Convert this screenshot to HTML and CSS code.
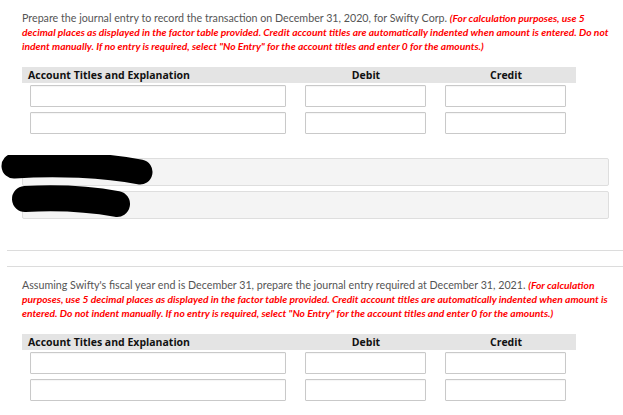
FILE: index.html
```html
<!DOCTYPE html>
<html lang="en">
<head>
<meta charset="utf-8">
<title>Journal entry</title>
<link rel="stylesheet" href="styles.css">
</head>
<body>
<div class="page">
  <section class="part">
    <p class="prompt">Prepare the journal entry to record the transaction on December 31, 2020, for Swifty Corp. <em class="note">(For calculation purposes, use 5 decimal places as displayed in the factor table provided. Credit account titles are automatically indented when amount is entered. Do not indent manually. If no entry is required, select "No Entry" for the account titles and enter 0 for the amounts.)</em></p>
    <div class="journal">
      <div class="head head-title">Account Titles and Explanation</div>
      <div class="head head-num">Debit</div>
      <div class="head head-num">Credit</div>
      <div class="cell"><input class="field field-title" type="text"></div>
      <div class="cell"><input class="field field-num" type="text"></div>
      <div class="cell"><input class="field field-num" type="text"></div>
      <div class="cell"><input class="field field-title" type="text"></div>
      <div class="cell"><input class="field field-num" type="text"></div>
      <div class="cell"><input class="field field-num" type="text"></div>
    </div>
    <div class="panels">
      <div class="panel"></div>
      <div class="panel"></div>
      <svg class="redact" width="160" height="70" viewBox="0 0 160 70" aria-hidden="true">
        <path d="M14 11 C 55 8, 105 10, 140 17" fill="none" stroke="#000" stroke-width="25" stroke-linecap="round"/>
        <path d="M25 44 C 60 42, 95 45, 117 49" fill="none" stroke="#000" stroke-width="26" stroke-linecap="round"/>
      </svg>
    </div>
  </section>
  <div class="rule rule-a"></div>
  <div class="rule rule-b"></div>
  <section class="part part-two">
    <p class="prompt">Assuming Swifty's fiscal year end is December 31, prepare the journal entry required at December 31, 2021. <em class="note">(For calculation purposes, use 5 decimal places as displayed in the factor table provided. Credit account titles are automatically indented when amount is entered. Do not indent manually. If no entry is required, select "No Entry" for the account titles and enter 0 for the amounts.)</em></p>
    <div class="journal">
      <div class="head head-title">Account Titles and Explanation</div>
      <div class="head head-num">Debit</div>
      <div class="head head-num">Credit</div>
      <div class="cell"><input class="field field-title" type="text"></div>
      <div class="cell"><input class="field field-num" type="text"></div>
      <div class="cell"><input class="field field-num" type="text"></div>
      <div class="cell"><input class="field field-title" type="text"></div>
      <div class="cell"><input class="field field-num" type="text"></div>
      <div class="cell"><input class="field field-num" type="text"></div>
    </div>
  </section>
</div>
</body>
</html>
```

FILE: styles.css
```css
* { box-sizing: border-box; }
html, body { margin: 0; padding: 0; background: #fff; }
body { font-family: Lato, "Open Sans", sans-serif; }

.page { width: 623px; height: 415px; overflow: hidden; }

.part { padding: 11px 0 0 22px; }
.part-two { padding-top: 11px; }

.prompt {
  margin: 0;
  width: 592px;
  font-size: 10.7px;
  line-height: 14px;
  color: #555;
}
.note {
  color: #f00;
  font-weight: bold;
  font-style: italic;
  font-size: 10.25px;
}

.journal {
  margin-top: 14px;
  display: grid;
  grid-template-columns: 274px 140px 140px;
  grid-auto-rows: auto;
  width: 554px;
}
.head {
  height: 16px;
  background: #e4e4e4;
  font-family: "Open Sans", Lato, sans-serif;
  font-weight: bold;
  font-size: 10.5px;
  line-height: 16px;
  color: #111;
  margin-bottom: 2px;
}
.head-title { padding-left: 6px; }
.head-num { text-align: center; }

.cell { height: 27px; display: flex; align-items: flex-start; }
.field {
  display: block;
  height: 22px;
  margin: 0;
  padding: 0;
  border: 1px solid #c9c9c9;
  border-radius: 1px;
  background: #fff;
  box-shadow: inset 0 1px 1px rgba(0,0,0,0.04);
}
.field-title { width: 256px; margin-left: 8px; }
.field-num { width: 121px; margin-left: 9px; }

.panels {
  position: relative;
  margin-top: 19px;
  display: flex;
  flex-direction: column;
  gap: 5px;
  width: 587px;
}
.panel {
  height: 28px;
  background: #f4f4f4;
  border: 1px solid #dedede;
  border-radius: 2px;
}
.redact {
  position: absolute;
  left: -22px;
  top: -3px;
}

.rule {
  margin-left: 7px;
  border-top: 1px solid #dcdcdc;
}
.rule-a { margin-top: 31px; }
.rule-b { margin-top: 15px; }
```
